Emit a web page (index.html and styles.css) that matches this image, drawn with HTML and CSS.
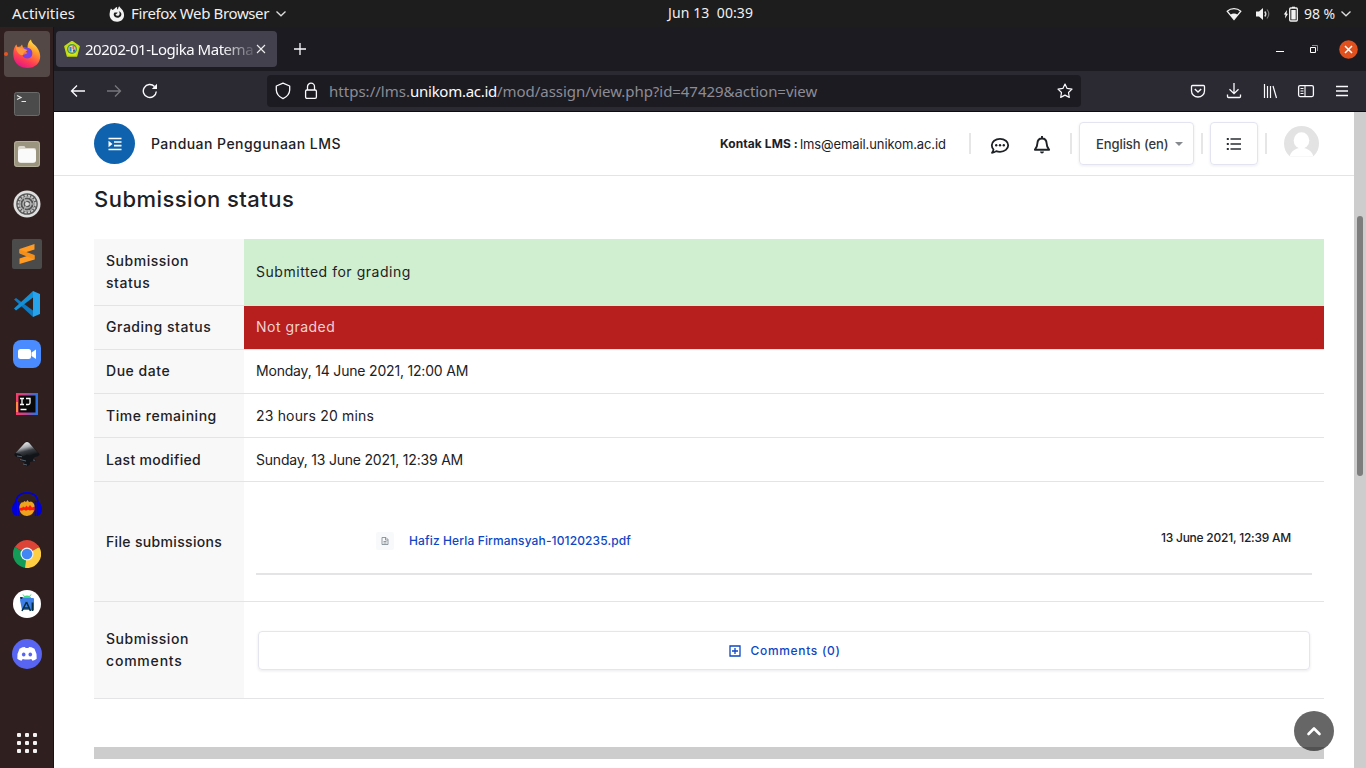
FILE: index.html
```html
<!DOCTYPE html>
<html lang="en">
<head>
<meta charset="utf-8">
<title>Submission status</title>
<link rel="stylesheet" href="styles.css">
</head>
<body>
<div class="desktop">
  <header class="topbar">
    <span class="t-act">Activities</span>
    <span class="app">
      <svg width="16" height="16" viewBox="0 0 16 16"><path fill="#f2f2f2" d="M2 2.500 3.400 4 5 3.300C6 2 7 1.300 8.200 1c-.4 1.200 0 2 .8 2.600 0-1 .3-2.200 1.200-3.300.8 1.700 2.300 2.200 3.600 4.200C16.500 9 15 15.500 8.300 15.700 2.500 15.800-.3 11 .8 6.500 1 5 1.300 4 2 2.500z"/><path fill="#1d1d1d" d="M5.500 6.500c1 .2 2-.3 3.200.2-.3.900-1.900 1-2.200 2.100 1 1.500 3.600 1.200 4-.6.3-1.200-.2-2.200-1-2.900 2.700.5 3.600 3 2.400 4.800-1.800 2.800-6.700 2.200-7.200-1.300 0-1 .2-1.700.8-2.300z"/></svg>
      <span class="t-app">Firefox Web Browser</span>
      <svg width="12" height="8" viewBox="0 0 12 8"><path d="M1.500 1.500 6 5.800l4.500-4.300" fill="none" stroke="#ddd" stroke-width="1.300"/></svg>
    </span>
    <span class="t-clock">Jun 13&nbsp; 00:39</span>
    <span class="tray">
      <svg width="16" height="14" viewBox="0 0 16 14"><path d="M1.200 4.200C5 .8 11 .8 14.800 4.200L8 12.500z" fill="none" stroke="#f2f2f2" stroke-width="1.200"/><path d="M4.300 7.800c2.400-1.700 5-1.700 7.400 0L8 12.500z" fill="#f2f2f2"/></svg>
      <svg class="vol" width="16" height="14" viewBox="0 0 16 14"><path d="M1 4.500h3L8 1v12L4 9.500H1z" fill="#f2f2f2"/><path d="M9.800 4.500q2 2.500 0 5" fill="none" stroke="#ddd" stroke-width="1.400"/><path d="M12 2.500q3.600 4.500 0 9" fill="none" stroke="#777" stroke-width="1.200"/></svg>
      <svg class="bat" width="16" height="16" viewBox="0 0 16 16"><path d="M4 4 .8 8.600h1.700L2 12.500l3-4.700H3.500z" fill="#fff"/><path d="M9 2V.7h3V2" fill="#fff"/><rect x="6.700" y="2" width="7.600" height="13" rx="1" fill="none" stroke="#f2f2f2" stroke-width="1.300"/><path d="M8.300 4h4.400v9.500H8.300z" fill="#f2f2f2"/></svg>
      <span class="t-pct">98 %</span>
      <svg width="12" height="8" viewBox="0 0 12 8"><path d="M1.500 1.500 6 5.800l4.500-4.300" fill="none" stroke="#ddd" stroke-width="1.300"/></svg>
    </span>
  </header>
  <div class="main">
    <nav class="dock">
      <div class="slot active"><svg width="30" height="30" viewBox="0 0 30 30"><defs><linearGradient id="ff" x1=".8" y1="0" x2=".3" y2="1"><stop offset="0" stop-color="#fff14a"/><stop offset=".35" stop-color="#ff9a2b"/><stop offset=".7" stop-color="#ff4052"/><stop offset="1" stop-color="#e31587"/></linearGradient></defs><path fill="url(#ff)" d="M1.500 12C2 9 3 7 4.300 5.500L5.500 8l3-.5 1.500-2 1 3 4.500.5c0-4 1-6.500 3.500-8.500.5 4 3.500 4.500 6 8C32 18 27 29 15 29 5 29 0 21 1.500 12z"/><path fill="#7543e5" d="M11.500 9.500c7-2.500 10 2.500 8.500 7-1.500 4-8 4-9.500 0 2-1 3.500-1.500 5-2.500-1.500-.8-3-2-4-4.500z"/><path fill="#ff9640" d="M4 8l7 1.500 4.500 1.500c-1 1.700-4 2-4.500 5-3 1-7-3-7-8z"/></svg></div>
      <div class="slot"><svg width="26" height="24" viewBox="0 0 26 24"><rect x=".5" y=".5" width="25" height="23" rx="2" fill="#4b4b4b" stroke="#6a6a6a"/><path d="M3 3.500l4 2-4 2M7.500 9.500H12" fill="none" stroke="#e8e8e8" stroke-width="1.200"/></svg></div>
      <div class="slot"><svg width="28" height="28" viewBox="0 0 28 28"><rect x="1" y="1" width="26" height="26" rx="3" fill="#9b957f"/><rect x="1.500" y="1.500" width="25" height="25" rx="3" fill="none" stroke="#b5af9b"/><path d="M5 8q0-2 2-2h4q1 0 1.500 2H21q2 0 2 2v10q0 3-3 3H8q-3 0-3-3z" fill="#dcd8cf"/><rect x="5" y="9" width="18" height="13.500" rx="3" fill="#fafafa"/></svg></div>
      <div class="slot"><svg width="28" height="28" viewBox="0 0 28 28"><circle cx="14" cy="14" r="13.500" fill="#dfdfdf"/><circle cx="14" cy="14" r="10.800" fill="#565656"/><circle cx="14" cy="14" r="8.500" fill="none" stroke="#ccc" stroke-width="1.800" stroke-dasharray="2.200 1.200"/><circle cx="14" cy="14" r="7" fill="none" stroke="#c8c8c8"/><circle cx="14" cy="14" r="4" fill="none" stroke="#bbb" stroke-width="1.300"/><path d="M14 14h6M14 14l-3 6M14 14l-3-6" stroke="#bbb"/><circle cx="14" cy="14" r="2" fill="#ddd"/></svg></div>
      <div class="slot"><svg width="30" height="30" viewBox="0 0 30 30"><rect width="30" height="30" rx="2" fill="#4b4b4b"/><path d="M7.500 10 22.500 5v5.500L13 13.500l9.500 3v4L7.500 25v-5.500l9-3-9-2.500z" fill="#ff9a22"/><path d="M7.500 10.500 22.500 16v4.500L7.500 14.500z" fill="#f49019"/></svg></div>
      <div class="slot"><svg width="28" height="28" viewBox="0 0 28 28"><path d="M1 9.500 3 8l19 14-2 5z" fill="#0e78c0"/><path d="M1 18.500 20 1l2 5L3 20.500z" fill="#1391d8"/><path d="M20 1l7 3v20l-7 3z" fill="#27a2ec"/></svg></div>
      <div class="slot"><svg width="28" height="28" viewBox="0 0 28 28"><rect width="28" height="28" rx="8" fill="#4a8cff"/><rect x="5" y="9" width="13" height="10" rx="2.500" fill="#fff"/><path d="M18.500 12.500 23 9.500v9.500l-4.500-3z" fill="#fff"/></svg></div>
      <div class="slot"><svg width="22" height="22" viewBox="0 0 22 22"><defs><linearGradient id="ij"><stop offset="0" stop-color="#f63d68"/><stop offset=".45" stop-color="#be4691"/><stop offset="1" stop-color="#1679ed"/></linearGradient></defs><path d="M0 0h22v22H0z" fill="url(#ij)"/><path d="M0 9h2v10H0z" fill="#ff8b43"/><path d="M2.500 2.500h17v17h-17z" fill="#090909"/><path d="M4 5.500h4M6 5.500v6M4 11.500h4M10 5.500h4v4.500q0 1.500-1.700 1.500H10M4.500 16.500h6" fill="none" stroke="#fff" stroke-width="1.300"/></svg></div>
      <div class="slot"><svg width="28" height="28" viewBox="0 0 28 28"><defs><linearGradient id="ink" x1=".3" y1="0" x2=".7" y2="1"><stop offset="0" stop-color="#f4f4f4"/><stop offset=".35" stop-color="#aeb0b4"/><stop offset=".6" stop-color="#3a3e44"/><stop offset="1" stop-color="#0a0c0f"/></linearGradient></defs><path d="M1.500 14 12 2.500q2-1.800 4 0L26.500 14q.5 2-4.500 3l-2 1.500 3 1.200-2 1.300-4 1v2.500l-3 2-4-2 2-2-6-2.500 3-1.800-5-1.200Q1 16 1.500 14z" fill="#11151a"/><path d="M2.500 13 12 2.800q2-1.600 4 0L25.500 13.500 20 14l-3 2-3-1.500-4 2-3-2.500z" fill="url(#ink)"/><path d="M7 19.500l6 1.500M10 24l4 1M20 20l2 .3M4 16l5 .8" stroke="#57636e"/></svg></div>
      <div class="slot"><svg width="30" height="26" viewBox="0 0 30 26"><path d="M7 16Q9 10.500 11 11.500l1.500-1.500 1.500 1 1.500-2 1.500 2 2-.5Q23 12 23 17q-1.500 7.500-8 8Q8 25 7 16z" fill="#eda51d"/><path d="M7 18l2-1.500 1 .5 1-1.500 2 1 1.500-2 1.500 2 2-2.500 2 2.500 3-1v4l-3-.5-2 .5-2-.8-2 1-2-1-2 1-3-.5z" fill="#ff1c0e"/><path d="M4 15Q3 2 15 1.800 27 2 26 15" fill="none" stroke="#0000d8" stroke-width="1.800"/><path d="M5 9v16q-5-1-5-7 0-5 5-9zm20 0v16q5-1 5-7 0-5-5-9zM5.500 10h1.800v15H5.500zm17.200 0h1.800v15h-1.800z" fill="#0000dc"/></svg></div>
      <div class="slot"><svg width="28" height="28" viewBox="0 0 28 28"><path d="M14 14 1.880 7A14 14 0 0 1 26.120 7z" fill="#dc4437"/><path d="M14 14 14 28A14 14 0 0 1 1.880 7z" fill="#159b58"/><path d="M14 14 26.120 7A14 14 0 0 1 12 27.850z" fill="#ffce42"/><path d="M14 7.500H26.300L25 5H14z" fill="#dc4437"/><path d="M8.400 17.200 1.900 6.900Q-1 12 .8 18L10 20z" fill="#159b58"/><path d="M19.600 17.200 13 28l3-.2 6-9z" fill="#ffce42"/><circle cx="14" cy="14" r="6.500" fill="#f2f2f2"/><circle cx="14" cy="14" r="5.300" fill="#4285f4"/></svg></div>
      <div class="slot"><svg width="28" height="28" viewBox="0 0 28 28"><circle cx="14" cy="14" r="14" fill="#fff"/><path d="M9.500 8.500q1-3 4.500-3t4.500 3z" fill="#3ddc84"/><path d="M10 4.500l1.500 2M18 4.500l-1.500 2" stroke="#3ddc84"/><path d="M7.500 8H20q1 0 1 1v11H9L7 10z" fill="#3f7fe8"/><path d="M7 7h3l-1 2H7.500z" fill="#07304b"/><path d="M13.500 12 9 21M13.500 12l4 9M11 18h5" fill="none" stroke="#073042" stroke-width="1.600"/><path d="M19.500 12.500V21" stroke="#073042" stroke-width="1.800"/></svg></div>
      <div class="slot"><svg width="30" height="30" viewBox="0 0 30 30"><circle cx="15" cy="15" r="15" fill="#5865f2"/><path d="M10.500 8.200 13 8l.5 1h3l.5-1 2.500.2 3 1.500q2.500 4.500 2.200 10-1.700 1.500-4.200 2l-1.200-1.800q-4.300 1.200-8.600 0L9.500 21.700q-2.500-.5-4.200-2-.3-5.500 2.200-10z" fill="#fff"/><ellipse cx="11.700" cy="15.500" rx="1.800" ry="2" fill="#5865f2"/><ellipse cx="18.300" cy="15.500" rx="1.800" ry="2" fill="#5865f2"/></svg></div>
      <div class="apps"><i></i><i></i><i></i><i></i><i></i><i></i><i></i><i></i><i></i></div>
    </nav>
    <div class="browser">
      <div class="tabs">
        <div class="tab">
          <svg width="16" height="16" viewBox="0 0 16 16"><path d="M8 .5 15 5.500 12.500 15h-9L1 5.500z" fill="#d5e812" stroke="#c3dc12" stroke-width="1.600" stroke-linejoin="round"/><circle cx="8" cy="8" r="5" fill="#49964c"/><circle cx="8" cy="8" r="3.600" fill="#dfd5c5"/><path d="M5.500 6h2v4.500h-2z" fill="#268bc8"/><path d="M8.500 5h1.800v3H8.500z" fill="#df6842"/><path d="M9 8.500h2v2.300H9z" fill="#315cab"/></svg>
          <span class="t-tab">20202-01-Logika Matema</span>
          <svg class="x" width="10" height="10" viewBox="0 0 10 10"><path d="m1 1 8 8M9 1 1 9" stroke="#eee" stroke-width="1.100"/></svg>
        </div>
        <svg class="plus" width="14" height="14" viewBox="0 0 14 14"><path d="M7 1v12M1 7h12" stroke="#fbfbfe" stroke-width="1.300"/></svg>
        <div class="wm">
          <svg width="8" height="8" viewBox="0 0 8 8"><path d="M0 6.500h8" stroke="#fff"/></svg>
          <svg width="8" height="8" viewBox="0 0 8 8"><path d="M2 .5h5.500V6" fill="none" stroke="#8b8b8e"/><path d="M.5 2.500h5v5h-5z" fill="none" stroke="#fff"/></svg>
          <svg width="19" height="19" viewBox="0 0 19 19"><circle cx="9.500" cy="9.500" r="9.300" fill="#e2501e"/><path d="m6 6 7 7m0-7-7 7" stroke="#fff" stroke-width="1.500"/></svg>
        </div>
      </div>
      <div class="toolbar">
        <div class="navs">
          <svg width="16" height="16" viewBox="0 0 16 16"><path d="M15 8H2M7 2.500 1.500 8 7 13.500" fill="none" stroke="#fbfbfe" stroke-width="1.300"/></svg>
          <svg width="16" height="16" viewBox="0 0 16 16"><path d="M1 8h13M9 2.500 14.500 8 9 13.500" fill="none" stroke="#77767d" stroke-width="1.300"/></svg>
          <svg width="16" height="16" viewBox="0 0 16 16"><path d="M14.300 8.500A6.500 6.500 0 1 1 12.500 3.500" fill="none" stroke="#fbfbfe" stroke-width="1.400"/><path d="M15 .8V6H9.800z" fill="#fbfbfe"/></svg>
        </div>
        <div class="url">
          <svg width="16" height="18" viewBox="0 0 16 18"><path d="M8 1.200 14.700 4v4Q14.500 13.500 8 16.700 1.500 13.500 1.300 8V4z" fill="none" stroke="#fbfbfe" stroke-width="1.300" stroke-linejoin="round"/></svg>
          <svg class="lock" width="14" height="18" viewBox="0 0 14 18"><rect x="1.600" y="8" width="10.800" height="8.300" rx="1.300" fill="none" stroke="#fbfbfe" stroke-width="1.300"/><path d="M3.500 8V4.700a3.500 3.500 0 0 1 7 0V8" fill="none" stroke="#fbfbfe" stroke-width="1.300"/></svg>
          <span class="addr"><span>https://lms.</span><b>unikom.ac.id</b><span class="path">/mod/assign/view.php?id=47429&amp;action=view</span></span>
          <svg class="star" width="16" height="16" viewBox="0 0 16 16"><path d="m8 1 2.100 4.400 4.900.7-3.500 3.400.8 4.900L8 12.100l-4.300 2.300.8-4.900L1 6.100l4.900-.7z" fill="none" stroke="#fbfbfe" stroke-width="1.200" stroke-linejoin="round"/></svg>
        </div>
        <div class="tools">
          <svg width="16" height="16" viewBox="0 0 16 16"><path d="M2.500 2.500h11q1 0 1 1V8a6.500 6 0 0 1-13 0V3.500q0-1 1-1z" fill="none" stroke="#fbfbfe" stroke-width="1.300"/><path d="M4.800 6 8 9l3.200-3" fill="none" stroke="#fbfbfe" stroke-width="1.400"/></svg>
          <svg width="16" height="16" viewBox="0 0 16 16"><path d="M8 0v10.500M3.500 6.300 8 10.700l4.500-4.400M1.500 11.500v2q0 1 1 1h11q1 0 1-1v-2" fill="none" stroke="#fbfbfe" stroke-width="1.300"/></svg>
          <svg width="16" height="16" viewBox="0 0 16 16"><path d="M2.500 1v14M5.500 3v12M8.500 3v12M11 3l3.500 12" fill="none" stroke="#fbfbfe" stroke-width="1.200"/></svg>
          <svg width="18" height="16" viewBox="0 0 18 16"><rect x="1.600" y="2.600" width="14.800" height="11" rx="1.500" fill="none" stroke="#fbfbfe" stroke-width="1.300"/><path d="M8 2.500v11M3.500 5.500h3M3.500 8h3M3.500 10.500h3" stroke="#fbfbfe" stroke-width="1.100"/></svg>
          <svg width="16" height="16" viewBox="0 0 16 16"><path d="M2 3.500h12M2 8h12M2 12.500h12" stroke="#fbfbfe" stroke-width="1.400"/></svg>
        </div>
      </div>
      <div class="view">
        <div class="page">
          <div class="head">
            <span class="menu"><svg width="14" height="14" viewBox="0 0 14 14"><path d="M.5 1.500h13M6 5h7.500M6 8.700h7.500M.5 12.500h13" stroke="#fff" stroke-width="1.700"/><path d="M.5 3.800 4.500 7 .5 10.200z" fill="#fff"/></svg></span>
            <span class="t-guide">Panduan Penggunaan LMS</span>
            <span class="contact"><b>Kontak LMS :</b> <span>lms@email.unikom.ac.id</span></span>
            <i class="sep s1"></i>
            <svg class="chat" width="20" height="18" viewBox="0 0 20 18"><path d="M10 1.800c4.700 0 8.200 2.900 8.200 6.500s-3.500 6.500-8.200 6.500c-1.400 0-2.600-.2-3.700-.7-1.200.9-2.700 1.600-4.300 1.700.8-1 1.400-2.200 1.500-3.300C2.400 11.300 1.800 9.900 1.800 8.300c0-3.600 3.500-6.500 8.200-6.500z" fill="none" stroke="#1d2125" stroke-width="1.800" stroke-linejoin="round"/><g fill="#1d2125"><circle cx="6.200" cy="8.300" r="1.200"/><circle cx="10" cy="8.300" r="1.200"/><circle cx="13.800" cy="8.300" r="1.200"/></g></svg>
            <svg class="bell" width="18" height="20" viewBox="0 0 18 20"><path d="M9 3.500c3 0 4.500 2.200 4.600 4.800.1 3.600.9 4.700 2.500 6.400H1.900c1.600-1.700 2.400-2.800 2.500-6.400C4.500 5.700 6 3.500 9 3.500zM9 1v2.500" fill="none" stroke="#1d2125" stroke-width="1.900" stroke-linejoin="round"/><path d="M7 16.500h4q-.3 2-2 2t-2-2z" fill="#1d2125"/></svg>
            <i class="sep s2"></i>
            <span class="btn lang"><span class="t-lang">English (en)</span><i class="caret"></i></span>
            <i class="sep s3"></i>
            <span class="btn list"><svg width="16" height="14" viewBox="0 0 16 14"><path d="M4.500 2H15M4.500 7H15M4.500 12H15" stroke="#2b2f33" stroke-width="1.600"/><path d="M.8 1h2v2h-2zM.8 6h2v2h-2zM.8 11h2v2h-2z" fill="#2b2f33"/></svg></span>
            <i class="sep s4"></i>
            <svg class="avatar" width="35" height="35" viewBox="0 0 35 35"><defs><clipPath id="av"><path d="M0 0h35v30.500H0z"/></clipPath></defs><g clip-path="url(#av)"><circle cx="17.500" cy="17.500" r="17.500" fill="#e3e3e3"/><ellipse cx="17.500" cy="14.500" rx="7.800" ry="8.300" fill="#fff"/><path d="M5 35q0-9.500 8-12.500l4.500-1 4.500 1q8 3 8 12.500z" fill="#fff"/></g></svg>
          </div>
          <div class="content">
            <h3>Submission status</h3>
            <div class="grid">
              <div class="row r1"><div class="th">Submission<br>status</div><div class="td green"><span class="v1">Submitted for grading</span></div></div>
              <div class="row r2"><div class="th">Grading status</div><div class="td red"><span class="v2">Not graded</span></div></div>
              <div class="row r3"><div class="th">Due date</div><div class="td"><span class="v3">Monday, 14 June 2021, 12:00 AM</span></div></div>
              <div class="row r4"><div class="th">Time remaining</div><div class="td"><span class="v4">23 hours 20 mins</span></div></div>
              <div class="row r5"><div class="th th5">Last modified</div><div class="td"><span class="v5">Sunday, 13 June 2021, 12:39 AM</span></div></div>
              <div class="row r6"><div class="th th5">File submissions</div><div class="td filecell">
                <div class="file">
                  <span class="ficon"><svg width="8" height="10" viewBox="0 0 8 10"><path d="M1 1.500h4L7 3.500v5H1zM4.500 1.500V4H7M2.500 5.500h3M2.500 7h3" fill="none" stroke="#868e96" stroke-width=".9"/></svg></span>
                  <a class="t-file">Hafiz Herla Firmansyah-10120235.pdf</a>
                  <span class="t-date">13 June 2021, 12:39 AM</span>
                </div></div></div>
              <div class="row r7"><div class="th"><span>Submission<br><span class="cm">comments</span></span></div><div class="td comcell">
                <div class="comments"><svg width="12" height="12" viewBox="0 0 12 12"><path d="M1 1h10v10H1zM6 3v6M3 6h6" fill="none" stroke="#0f47c4" stroke-width="1.300"/></svg><span class="t-com">Comments (0)</span></div></div></div>
            </div>
            <div class="bar"></div>
          </div>
          <span class="totop"><svg width="16" height="10" viewBox="0 0 16 10"><path d="m2.500 8 5.500-5.500L13.500 8" fill="none" stroke="#fff" stroke-width="2.600" stroke-linecap="round" stroke-linejoin="round"/></svg></span>
        </div>
        <div class="scroll"><div class="thumb"></div></div>
      </div>
    </div>
  </div>
</div>
</body>
</html>
```
FILE: styles.css
```css
*{box-sizing:border-box}
body{margin:0;overflow:hidden}
svg{display:block;flex:none}
.desktop{width:1366px;height:768px;display:flex;flex-direction:column;overflow:hidden;font-family:"Noto Sans",sans-serif;white-space:nowrap}
.topbar{height:27px;flex:none;background:#1d1d1d;color:#f0f0f0;display:grid;grid-template-columns:97px 559px 1fr auto;align-items:center;padding:0 14px 0 12px;font-size:15px;line-height:27px}
.t-act{letter-spacing:.05px}
.app{display:flex;align-items:center;gap:6px}
.t-app{letter-spacing:-.37px}
.t-clock{font-size:14px;letter-spacing:.09px;line-height:25px;padding-bottom:2px}
.tray{display:flex;align-items:center}
.tray svg:first-child{margin-right:1px}
.vol{margin-left:12px}
.bat{margin-left:12px;margin-right:5px}
.t-pct{font-size:14px;letter-spacing:-.07px;margin-right:5px}
.main{flex:1;display:flex;min-height:0}
.dock{width:54px;flex:none;background:#2f1f1e;border-right:1px solid #1b1110;padding:4px 3px 0 4px;display:flex;flex-direction:column;gap:4px}
.slot{width:46px;height:46px;flex:none;border-radius:4px;display:flex;align-items:center;justify-content:center;position:relative}
.active{background:#544846}
.active::before{content:"";position:absolute;left:0;top:21px;width:4px;height:4px;border-radius:50%;background:#e95420}
.apps{margin:52px 13px 0;display:grid;grid-template-columns:repeat(3,4px);gap:4px}
.apps i{width:4px;height:4px;border-radius:1px;background:#f2f2f2}
.browser{flex:1;display:flex;flex-direction:column;min-width:0}
.tabs{height:44px;flex:none;background:#1c1b22;display:flex;align-items:center;padding:0 8px 0 2px}
.tab{width:221px;height:36px;border-radius:4px;background:#42414d;color:#fbfbfe;display:flex;align-items:center;padding-left:8px;font-size:15px}
.t-tab{margin-left:5px;letter-spacing:-.47px;width:170px;overflow:hidden;-webkit-mask-image:linear-gradient(90deg,#000 80%,transparent 102%);mask-image:linear-gradient(90deg,#000 80%,transparent 102%)}
.x{margin-left:1px}
.plus{margin-left:16px}
.wm{margin-left:auto;display:flex;align-items:center;gap:26px}
.wm svg:last-child{margin-left:-5px}
.toolbar{height:41px;flex:none;background:#2b2a33;border-bottom:1px solid #0c0c0d;display:flex;align-items:center;padding:0 16px}
.navs{display:flex;gap:20px;width:197px}
.url{width:814px;height:32px;background:#1c1b22;border-radius:4px;display:flex;align-items:center;padding:0 8px;font-size:15px;color:#8d8c95}
.lock{margin-left:13px}
.addr{margin-left:11px;flex:1;letter-spacing:.02px}
.addr b{font-weight:400;color:#fbfbfe;letter-spacing:-.27px}
.path{letter-spacing:-.05px}
.tools{margin-left:auto;display:flex;gap:20px}
.tools svg:nth-child(4){margin:0 -1px}
.view{flex:1;display:flex;min-height:0;background:#fff}
.page{width:1300px;position:relative;font-family:Inter,sans-serif;color:#1d2125;overflow:hidden}
.head{height:64px;border-bottom:1px solid #e4e4e6;display:flex;align-items:center;padding-left:40px}
.menu{width:41px;height:41px;border-radius:50%;background:#0f62ad;display:flex;align-items:center;justify-content:center}
.t-guide{margin-left:16px;font-size:14px;font-weight:500;letter-spacing:.45px;width:569px}
.contact{width:249px;font-size:13px;letter-spacing:-.1px;display:flex;gap:2px;align-items:center}
.contact b{font-size:12px;letter-spacing:.09px}
.sep{width:2px;height:21px;background:#e6e6e6}
.chat{margin-left:19px;position:relative;top:2px}
.bell{margin-left:23px;position:relative;top:1px}
.s2{margin-left:19px}
.btn{height:43px;border:1px solid #e2e5f1;border-radius:4px;box-shadow:0 1px 3px rgba(20,20,60,.08);display:flex;align-items:center}
.lang{width:115px;margin-left:7px;padding-left:16px}
.t-lang{font-size:13px;font-weight:500;letter-spacing:-.08px;color:#34383d;width:79px}
.caret{border:4px solid transparent;border-top-color:#86898d;border-bottom:0}
.s3{margin-left:7px}
.list{width:48px;margin-left:7px;justify-content:center}
.s4{margin-left:7px}
.avatar{margin-left:17px}
.content{padding:0 30px 0 40px}
h3{margin:8px 0 0;height:55px;font-size:22px;line-height:30px;font-weight:500;letter-spacing:.47px}
.grid{font-size:14px;line-height:22px}
.row{display:flex;height:44px;border-bottom:1px solid #e4e4e6}
.th{width:150px;background:#f8f8f8;padding-left:12px;font-weight:500;letter-spacing:.53px;display:flex;align-items:center}
.th5{letter-spacing:.33px}
.cm{letter-spacing:.8px}
.td{flex:1;padding:0 12px;display:flex;align-items:center}
.r1{height:67px}
.r1 .td,.r2 .th,.r2 .td,.r3 .th,.r3 .td{padding-bottom:2px}
.green{background:#d0efd0;margin-bottom:-1px}
.red{background:#b71f1f;color:#f1d2d2}
.v1{letter-spacing:.53px}.v2{letter-spacing:.48px}.v3{letter-spacing:-.19px}.v4{letter-spacing:.17px}.v5{letter-spacing:-.21px}
.r6{height:120px}
.filecell{align-items:flex-start}
.file{width:1056px;height:93px;border-bottom:2px solid #e4e4e6;display:flex;align-items:center;padding:26px 21px 0 120px;font-size:12px;font-weight:500}
.ficon{width:18px;height:18px;background:#f8f9fa;border-radius:2px;display:flex;align-items:center;justify-content:center}
.t-file{margin-left:15px;color:#0f47c4;letter-spacing:.13px}
.t-date{margin-left:auto;letter-spacing:-.24px;padding-bottom:6px}
.r7{height:97px}
.comcell{padding:0 14px}
.comments{flex:1;height:39px;border:1px solid #e4e5ee;border-radius:4px;box-shadow:0 1px 3px rgba(20,20,60,.09);display:flex;align-items:center;justify-content:center;gap:9px;padding:1px 0 0 2px;color:#0f47c4;font-size:12px;font-weight:500}
.t-com{letter-spacing:.68px}
.bar{margin-top:48px;height:12px;background:#cdcdcd}
.totop{position:absolute;right:20px;bottom:17px;width:40px;height:40px;border-radius:50%;background:rgba(0,0,0,.6);display:flex;align-items:center;justify-content:center}
.scroll{width:12px;background:#cdcdcd;padding:104px 3px 0}
.thumb{height:260px;border-radius:3px;background:#7d7d7d}
```
